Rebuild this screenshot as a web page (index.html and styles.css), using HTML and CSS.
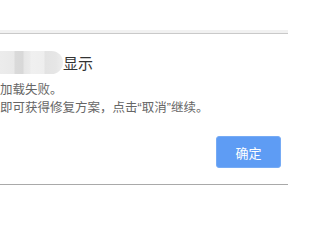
FILE: index.html
```html
<!DOCTYPE html>
<html lang="zh-CN">
<head>
<meta charset="utf-8">
<link rel="stylesheet" href="styles.css">
</head>
<body>
<div class="top"></div>
<div class="band"></div>
<div class="dialog">
  <div class="title-row">
    <div class="blur"></div>
    <span class="title">显示</span>
  </div>
  <div class="msg">
    <div>加载失败。</div>
    <div>即可获得修复方案，点击<span class="q">“</span>取消<span class="q">”</span>继续。</div>
  </div>
  <div class="actions">
    <button class="ok">确定</button>
  </div>
</div>
</body>
</html>
```

FILE: styles.css
```css
html, body {
  margin: 0;
  padding: 0;
  background: #fff;
  width: 288px;
  height: 215px;
  overflow: hidden;
  font-family: "Noto Sans CJK SC", "Microsoft YaHei", sans-serif;
}
.top {
  height: 30px;
  background: #fff;
}
.band {
  height: 3px;
  background: #f1f1f1;
  border-bottom: 1px solid #c9c9c9;
}
.dialog {
  background: #fff;
  padding: 17px 0 16px 0;
  border-bottom: 1px solid #a9a9a9;
}
.title-row {
  display: flex;
  align-items: center;
  height: 23px;
}
.blur {
  width: 63px;
  height: 23px;
  border-radius: 0 12px 12px 0;
  background: linear-gradient(90deg,
    #ececec 0px, #e9e9e9 14px, #dadada 15px, #d8d8d8 23px,
    #e6e6e6 24px, #ebebeb 30px, #f0f0f0 31px, #eeeeee 44px,
    #e3e3e3 45px, #e6e6e6 56px, #eeeeee 63px);
}
.title {
  font-size: 15px;
  color: #333;
  line-height: 23px;
}
.msg {
  margin-top: 6px;
  font-size: 12.5px;
  line-height: 18px;
  color: #666;
}
.q {
  font-family: "Liberation Sans", Arial, sans-serif;
}
.actions {
  display: flex;
  justify-content: flex-end;
  margin-top: 19px;
  padding-right: 7px;
}
.ok {
  width: 65px;
  height: 32px;
  border: 1px solid #76abf5;
  border-radius: 3px;
  background: #5e9cf4;
  color: #fff;
  font-family: "Noto Sans CJK SC", "Microsoft YaHei", sans-serif;
  font-size: 13px;
  padding: 0;
}
```
